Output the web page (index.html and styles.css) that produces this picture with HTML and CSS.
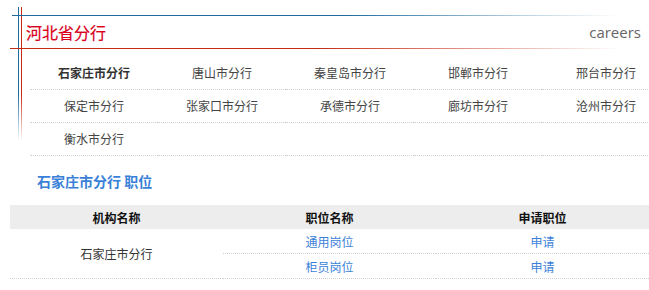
FILE: index.html
```html
<!DOCTYPE html>
<html lang="zh-CN">
<head>
    <meta charset="UTF-8">
    <title>河北省分行 careers</title>
    <link rel="stylesheet" href="styles.css">
</head>
<body>
    <div class="page">
        <div class="title-bar">
            <h1>河北省分行</h1>
            <span class="en">careers</span>
        </div>

        <ul class="branches">
            <li class="on">石家庄市分行</li>
            <li>唐山市分行</li>
            <li>秦皇岛市分行</li>
            <li>邯郸市分行</li>
            <li>邢台市分行</li>
            <li>保定市分行</li>
            <li>张家口市分行</li>
            <li>承德市分行</li>
            <li>廊坊市分行</li>
            <li>沧州市分行</li>
            <li>衡水市分行</li>
            <li></li>
            <li></li>
            <li></li>
            <li></li>
        </ul>

        <h2 class="jobs-title">石家庄市分行 职位</h2>

        <table class="jobs">
            <tr>
                <th>机构名称</th>
                <th>职位名称</th>
                <th>申请职位</th>
            </tr>
            <tr>
                <td rowspan="2" class="org">石家庄市分行</td>
                <td><a href="#">通用岗位</a></td>
                <td><a href="#">申请</a></td>
            </tr>
            <tr>
                <td><a href="#">柜员岗位</a></td>
                <td><a href="#">申请</a></td>
            </tr>
        </table>
    </div>
</body>
</html>
```

FILE: styles.css
```css
html, body {
    margin: 0;
    padding: 0;
    overflow-x: hidden;
    background: #fff;
}
body {
    font-family: "Microsoft YaHei", "Noto Sans CJK SC", sans-serif;
    font-size: 12px;
    color: #333;
}
.page {
    padding-top: 15px;
    padding-bottom: 10px;
    /* the two vertical rules on the left */
    background-image:
        linear-gradient(to bottom, #1f6b9e 0, #1f6b9e 65%, rgba(31, 107, 158, 0) 100%),
        linear-gradient(to bottom, #c62a12 0, #c62a12 65%, rgba(198, 42, 18, 0) 100%);
    background-size: 1px 134px, 1px 134px;
    background-position: 18px 7px, 21px 7px;
    background-repeat: no-repeat;
}
.title-bar {
    height: 34px;
    padding: 0 8px 0 26px;
    display: flex;
    align-items: center;
    justify-content: space-between;
    background-image:
        linear-gradient(to right, #1f6b9e 0, #1f6b9e 55%, rgba(31, 107, 158, 0.3) 85%, rgba(31, 107, 158, 0) 100%),
        linear-gradient(to right, #c62a12 0, #c62a12 50%, rgba(198, 42, 18, 0.3) 85%, rgba(198, 42, 18, 0) 100%);
    background-size: 606px 1px, 610px 1px;
    background-position: 12px 0, 10px 33px;
    background-repeat: no-repeat;
}
.title-bar h1 {
    margin: 0;
    font-size: 16px;
    font-weight: normal;
    color: #d9001b;
    line-height: 20px;
    -webkit-text-stroke: 0.2px #d9001b;
}
.title-bar .en {
    font-family: "Open Sans", sans-serif;
    font-size: 15px;
    color: #666;
    line-height: 20px;
}

.branches {
    list-style: none;
    margin: 8px 0 0 30px;
    padding: 0;
    width: 640px;
    display: grid;
    grid-template-columns: repeat(5, 128px);
}
.branches li {
    height: 32px;
    line-height: 32px;
    text-align: center;
    border-bottom: 1px dotted #d2d2d2;
    color: #444;
}
.branches li.on {
    font-weight: bold;
    color: #333;
}

.jobs-title {
    margin: 0 0 14px;
    padding: 15px 0 0 37px;
    font-size: 14px;
    line-height: 20px;
    color: #3a7fd8;
}

.jobs {
    width: 639px;
    margin-left: 10px;
    border-collapse: collapse;
    border-bottom: 1px dotted #d2d2d2;
}
.jobs th {
    height: 24px;
    padding: 0;
    background: #ededed;
    font-weight: bold;
    color: #111;
    text-align: center;
    width: 33.33%;
}
.jobs td {
    height: 24px;
    padding: 0;
    text-align: center;
    border-bottom: 1px dotted #d2d2d2;
}
.jobs td.org {
    color: #333;
}
.jobs a {
    color: #3a7fd8;
    text-decoration: none;
}
```
